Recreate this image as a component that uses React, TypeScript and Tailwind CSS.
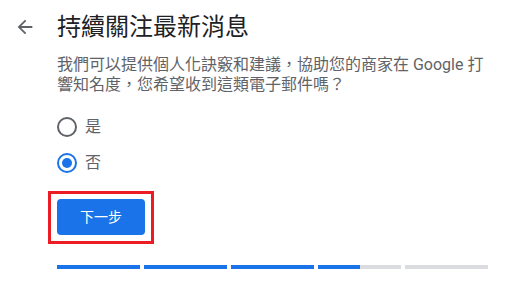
const FONT = "font-['Roboto','Noto_Sans_CJK_TC',sans-serif]";

function BackArrow() {
  return (
    <svg width="22" height="22" viewBox="0 0 24 24" className="text-[#5f6368]" aria-hidden="true">
      <path fill="currentColor" d="M20 11H7.83l5.59-5.59L12 4l-8 8 8 8 1.41-1.41L7.83 13H20v-2z" />
    </svg>
  );
}

function Radio({ label, checked }: { label: string; checked?: boolean }) {
  return (
    <label className="flex h-[36px] items-center gap-[8px]">
      <span
        className={`flex h-[20px] w-[20px] items-center justify-center rounded-full border-2 ${
          checked ? "border-[#1a73e8]" : "border-[#5f6368]"
        }`}
      >
        {checked && <span className="h-[10px] w-[10px] rounded-full bg-[#1a73e8]" />}
      </span>
      <span className="text-[16px] leading-[20px] text-[#5f6368]">{label}</span>
    </label>
  );
}

const progress = [100, 100, 100, 50, 0];

export default function App() {
  return (
    <div className={`h-[291px] w-[513px] overflow-hidden bg-white ${FONT}`}>
      <div className="flex items-center pt-[11px]">
        <div className="flex w-[57px] justify-start pl-[14px]">
          <BackArrow />
        </div>
        <h1 className="text-[24px] leading-[32px] text-[#202124]">持續關注最新消息</h1>
      </div>

      <div className="pl-[57px] pr-[25px]">
        <p className="mt-[12px] text-[16px] leading-[20px] text-[#5f6368]">
          我們可以提供個人化訣竅和建議，協助您的商家在 Google 打響知名度，您希望收到這類電子郵件嗎？
        </p>

        <div className="mt-[14px] flex flex-col">
          <Radio label="是" />
          <Radio label="否" checked />
        </div>

        <div className="-ml-[9px] mt-[10px] w-[106px] border-[3px] border-[#ec1c24] px-[6px] pb-[6px] pt-[5px]">
          <button className="h-[36px] w-[88px] rounded-[4px] bg-[#1a73e8] text-[14px] text-white">下一步</button>
        </div>

        <div className="mt-[21px] flex gap-[4px]">
          {progress.map((p, i) => (
            <div key={i} className="h-[4px] w-[83px] bg-[#dadce0]">
              <div className="h-full bg-[#1a73e8]" style={{ width: `${p}%` }} />
            </div>
          ))}
        </div>
      </div>
    </div>
  );
}
